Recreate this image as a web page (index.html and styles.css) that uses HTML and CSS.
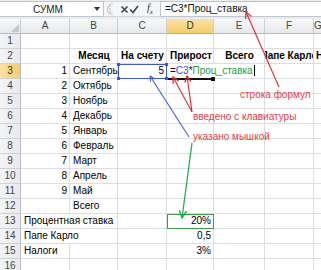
FILE: index.html
```html
<!DOCTYPE html>
<html lang="ru">
<head>
<meta charset="utf-8">
<link rel="stylesheet" href="styles.css">
</head>
<body>
<div class="app">
  <div class="fbar">
    <div class="namebox"><span class="nm">СУММ</span><svg class="dd" width="6" height="4" viewBox="0 0 6 4"><path d="M0 0h6L3 4z" fill="#333"/></svg></div>
    <div class="fbtns">
      <svg class="grip" width="10" height="14" viewBox="0 0 10 14"><path d="M8 1.5A5.5 5.5 0 0 0 8 12.5" fill="none" stroke="#c3c8cf" stroke-width="1.2"/><circle cx="5" cy="4" r="0.7" fill="#9aa0a8"/><circle cx="5" cy="7" r="0.7" fill="#9aa0a8"/><circle cx="5" cy="10" r="0.7" fill="#9aa0a8"/></svg>
      <svg class="ico x" width="9" height="9" viewBox="0 0 9 9"><path d="M1.5 1.5l6 6M7.5 1.5l-6 6" stroke="#444" stroke-width="1.6"/></svg>
      <svg class="ico chk" width="10" height="9" viewBox="0 0 10 9"><path d="M1 4.5l3 3 5-6.5" fill="none" stroke="#444" stroke-width="1.6"/></svg>
      <span class="fx">f<sub>x</sub></span>
    </div>
    <div class="finput">=C3*Проц_ставка</div>
  </div>

  <div class="sheet">
    <div class="ch corner"><svg width="8" height="8" viewBox="0 0 8 8"><path d="M8 0V8H0z" fill="#c4c8ce"/></svg></div>
    <div class="ch">A</div><div class="ch">B</div><div class="ch">C</div><div class="ch sel">D</div><div class="ch">E</div><div class="ch">F</div><div class="ch">G</div>

    <div class="rh">1</div><div class="c"></div><div class="c"></div><div class="c"></div><div class="c"></div><div class="c"></div><div class="c"></div><div class="c"></div>

    <div class="rh">2</div><div class="c"></div><div class="c b ctr">Месяц</div><div class="c b ctr">На счету</div><div class="c b ctr">Прирост</div><div class="c b ctr">Всего</div><div class="c b ctr clip">Папе Карло</div><div class="c b clip">Налоги</div>

    <div class="rh sel">3</div><div class="c r">1</div><div class="c">Сентябрь</div><div class="c r">5</div><div class="c over"><span class="k">=</span><span class="ref">C3</span><span class="k">*</span><span class="nmref">Проц_ставка</span><span class="caret"></span></div><div class="c"></div><div class="c"></div><div class="c"></div>

    <div class="rh">4</div><div class="c r">2</div><div class="c">Октябрь</div><div class="c"></div><div class="c"></div><div class="c"></div><div class="c"></div><div class="c"></div>
    <div class="rh">5</div><div class="c r">3</div><div class="c">Ноябрь</div><div class="c"></div><div class="c"></div><div class="c"></div><div class="c"></div><div class="c"></div>
    <div class="rh">6</div><div class="c r">4</div><div class="c">Декабрь</div><div class="c"></div><div class="c"></div><div class="c"></div><div class="c"></div><div class="c"></div>
    <div class="rh">7</div><div class="c r">5</div><div class="c">Январь</div><div class="c"></div><div class="c"></div><div class="c"></div><div class="c"></div><div class="c"></div>
    <div class="rh">8</div><div class="c r">6</div><div class="c">Февраль</div><div class="c"></div><div class="c"></div><div class="c"></div><div class="c"></div><div class="c"></div>
    <div class="rh">9</div><div class="c r">7</div><div class="c">Март</div><div class="c"></div><div class="c"></div><div class="c"></div><div class="c"></div><div class="c"></div>
    <div class="rh">10</div><div class="c r">8</div><div class="c">Апрель</div><div class="c"></div><div class="c"></div><div class="c"></div><div class="c"></div><div class="c"></div>
    <div class="rh">11</div><div class="c r">9</div><div class="c">Май</div><div class="c"></div><div class="c"></div><div class="c"></div><div class="c"></div><div class="c"></div>
    <div class="rh">12</div><div class="c"></div><div class="c">Всего</div><div class="c"></div><div class="c"></div><div class="c"></div><div class="c"></div><div class="c"></div>
    <div class="rh">13</div><div class="c over">Процентная ставка</div><div class="c"></div><div class="c"></div><div class="c r">20%</div><div class="c"></div><div class="c"></div><div class="c"></div>
    <div class="rh">14</div><div class="c over">Папе Карло</div><div class="c"></div><div class="c"></div><div class="c r">0,5</div><div class="c"></div><div class="c"></div><div class="c"></div>
    <div class="rh">15</div><div class="c">Налоги</div><div class="c"></div><div class="c"></div><div class="c r">3%</div><div class="c"></div><div class="c"></div><div class="c"></div>
    <div class="rh">16</div><div class="c"></div><div class="c"></div><div class="c"></div><div class="c"></div><div class="c"></div><div class="c"></div><div class="c"></div>
  </div>

  <svg class="overlay" width="321" height="270" viewBox="0 0 321 270">
    <defs>
      <marker id="ar" viewBox="0 0 10 10" refX="9" refY="5" markerWidth="7" markerHeight="7" orient="auto-start-reverse"><path d="M1 1L9 5L1 9" fill="none" stroke="#e0242e" stroke-width="1.6"/></marker>
      <marker id="ab" viewBox="0 0 10 10" refX="9" refY="5" markerWidth="6" markerHeight="6" orient="auto-start-reverse"><path d="M1 1L9 5L1 9" fill="none" stroke="#3f62cf" stroke-width="1.6"/></marker>
      <marker id="ag" viewBox="0 0 10 10" refX="9" refY="5" markerWidth="7" markerHeight="7" orient="auto-start-reverse"><path d="M1 1L9 5L1 9" fill="none" stroke="#27b04a" stroke-width="1.6"/></marker>
    </defs>
    <rect x="118.5" y="64.5" width="48" height="14" fill="none" stroke="#3b57d3" stroke-width="1"/>
    <rect x="117" y="63" width="3" height="3" fill="#3b57d3"/>
    <rect x="165" y="63" width="3" height="3" fill="#3b57d3"/>
    <rect x="117" y="77" width="3" height="3" fill="#3b57d3"/>
    <rect x="165" y="77" width="3" height="3" fill="#3b57d3"/>
    <path d="M168 79h45" stroke="#111" stroke-width="2"/>
    <rect x="211" y="77" width="4" height="4" fill="#111"/>
    <rect x="167.5" y="214.5" width="46" height="14" fill="none" stroke="#3a9d4a" stroke-width="1"/>
    <line x1="279" y1="87" x2="246" y2="12" stroke="#e0242e" stroke-width="1.1" marker-end="url(#ar)"/>
    <line x1="192" y1="112" x2="173" y2="77" stroke="#e0242e" stroke-width="1.1" marker-end="url(#ar)"/>
    <line x1="192" y1="112" x2="187" y2="76" stroke="#e0242e" stroke-width="1.1" marker-end="url(#ar)"/>
    <line x1="189" y1="137" x2="150" y2="76" stroke="#3f62cf" stroke-width="1.1" marker-end="url(#ab)"/>
    <line x1="192" y1="143" x2="182" y2="218" stroke="#27b04a" stroke-width="1.3" marker-end="url(#ag)"/>
  </svg>
  <div class="note n1">строка формул</div>
  <div class="note n2">введено с клавиатуры</div>
  <div class="note n3">указано мышкой</div>
</div>
</body>
</html>
```

FILE: styles.css
```css
* { box-sizing: border-box; }
html, body { margin: 0; padding: 0; background: #fff; }
body { font-family: "Liberation Sans", Arial, sans-serif; font-size: 10px; color: #000; }
.app { position: relative; width: 321px; height: 270px; overflow: hidden; background: #fff; }

.fbar { display: flex; height: 19px; padding: 1px 0 2px 0; background: #e9ecf0; }
.namebox { width: 104px; flex: none; height: 16px; display: flex; align-items: center; background: #fff; border: 1px solid #bfc5cc; border-left: none; }
.nm { flex: 1; text-align: center; color: #222; font-size: 10px; padding-left: 2px; }
.dd { margin-right: 3px; }
.fbtns { width: 56px; flex: none; height: 16px; display: flex; align-items: center; background: #f4f5f7; border-top: 1px solid #d4d8dd; border-bottom: 1px solid #d4d8dd; }
.grip { margin: 0 5px 0 1px; flex: none; }
.ico { flex: none; }
.chk { margin-right: 8px; }
.fx { font-family: "Liberation Serif", serif; font-style: italic; font-size: 10px; color: #333; }
.fx sub { font-size: 7px; }
.finput { flex: 1; height: 16px; background: #fff; border: 1px solid #bfc5cc; border-right: none; padding-left: 4px; line-height: 14px; color: #111; white-space: nowrap; }

.sheet { display: grid; grid-template-columns: 21px 49px 48px 49px 47px 51px 49px 1fr; grid-template-rows: 15px repeat(16, 15px); }
.ch { background: linear-gradient(#f7f8f9, #e6e8eb); border-right: 1px solid #c9cdd2; border-bottom: 1px solid #b8bdc4; color: #444; text-align: center; line-height: 14px; font-size: 10px; }
.ch.sel { background: linear-gradient(#fbe3a3, #f4cc6b); border-bottom-color: #d9a93f; color: #333; }
.corner { display: flex; align-items: flex-end; justify-content: flex-end; padding: 0 1px 1px 0; }
.rh { background: linear-gradient(90deg, #f3f4f6, #e8eaed); border-right: 1px solid #b8bdc4; border-bottom: 1px solid #ced2d7; color: #444; text-align: center; line-height: 14px; font-size: 10px; }
.rh.sel { background: linear-gradient(90deg, #fbe3a3, #f4cc6b); color: #333; }
.c { border-right: 1px solid #dcdee1; border-bottom: 1px solid #dcdee1; line-height: 14px; padding: 0 2px 0 3px; white-space: nowrap; overflow: visible; position: relative; }
.c.r { text-align: right; }
.c.ctr { text-align: center; }
.c.b { font-weight: bold; }
.c.clip { overflow: hidden; text-overflow: clip; padding: 0 2px; }
.c.ctr.clip { display: flex; justify-content: center; }
.c.over { border-right-color: transparent; }
.k { color: #111; }
.ref { color: #3050d8; }
.nmref { color: #2a9a3a; }
.caret { display: inline-block; width: 1px; height: 11px; background: #000; vertical-align: -2px; margin-left: 1px; }

.overlay { position: absolute; left: 0; top: 0; pointer-events: none; }
.note { position: absolute; color: #e2404e; font-size: 10px; line-height: 12px; white-space: nowrap; }
.n1 { left: 240px; top: 89px; }
.n2 { left: 193px; top: 111px; }
.n3 { left: 193px; top: 131px; }
```
